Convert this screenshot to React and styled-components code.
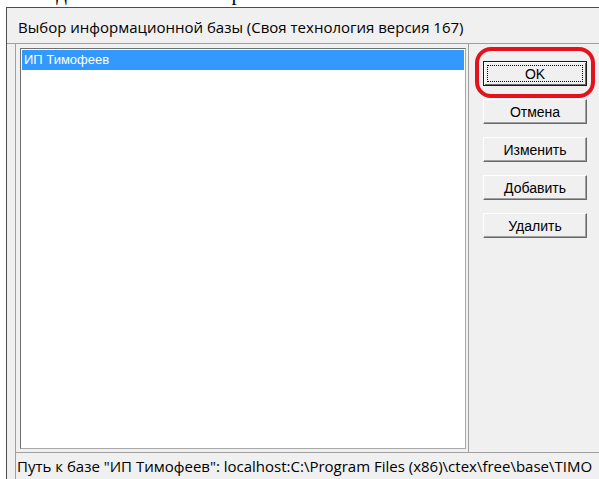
import styled, { createGlobalStyle } from 'styled-components';

const GlobalStyle = createGlobalStyle`
  html, body {
    margin: 0;
    padding: 0;
    background: #ffffff;
  }
  body {
    width: 599px;
    height: 479px;
    overflow: hidden;
  }
`;

const Page = styled.div`
  width: 599px;
  height: 479px;
  display: flex;
  flex-direction: column;
  overflow: hidden;
`;

// tail of the article line above the dialog, only its lower edge shows
const ArticleLine = styled.div`
  flex: none;
  width: 338px;
  height: 7px;
  overflow: hidden;
  display: flex;
  justify-content: flex-end;
  white-space: nowrap;
  font-family: 'Liberation Serif', 'Times New Roman', serif;
  font-size: 21px;
  line-height: 24px;
  color: #000;

  span {
    flex: none;
    margin-top: -19px;
  }
`;

const Window = styled.div`
  flex: 1;
  min-height: 0;
  margin-left: 6px;
  display: flex;
  flex-direction: column;
  background: #f0f0f0;
  border-left: 1px solid #4d4d4d;
  border-top: 1px solid #4d4d4d;
`;

const TitleBar = styled.div`
  flex: none;
  height: 26px;
  padding: 9px 0 0 11px;
  border-bottom: 1px solid #a0a0a0;
  font-family: 'Open Sans', 'Noto Sans', sans-serif;
  font-size: 15px;
  line-height: 20px;
  color: #000;
  white-space: nowrap;
`;

const Body = styled.div`
  flex: 1;
  min-height: 0;
  padding-left: 8px;
  display: flex;
  flex-direction: column;
`;

const Main = styled.div`
  flex: none;
  height: 408px;
  display: flex;
`;

const ListFrame = styled.div`
  flex: none;
  width: 446px;
  padding: 4px 2px 3px 4px;
  border-left: 1px solid #a0a0a0;
  border-right: 1px solid #a0a0a0;
  display: flex;
`;

const ListBox = styled.div`
  flex: 1;
  background: #ffffff;
  border-top: 1px solid #6f6f6f;
  border-left: 1px solid #6f6f6f;
  border-right: 1px solid #a9a9a9;
  border-bottom: 1px solid #a9a9a9;
  padding: 1px 1px 0 1px;
`;

const ListItem = styled.div`
  height: 20px;
  padding-left: 2px;
  font-family: 'Liberation Sans', Arial, sans-serif;
  font-size: 13px;
  line-height: 20px;
  color: ${({ selected }) => (selected ? '#ffffff' : '#000000')};
  background: ${({ selected }) => (selected ? '#3399ff' : 'transparent')};
`;

const Sidebar = styled.div`
  flex: 1;
  padding: 17px 0 0 14px;
  display: flex;
  flex-direction: column;
  gap: 13px;
`;

const ButtonSlot = styled.div`
  position: relative;
  width: 104px;
  height: 25px;
`;

const Button = styled.button`
  width: 104px;
  height: 25px;
  margin: 0;
  padding: 0;
  display: flex;
  align-items: center;
  justify-content: center;
  background: #f0f0f0;
  border: 1px solid;
  border-color: ${({ primary }) =>
    primary ? '#1a1a1a' : '#ffffff #696969 #696969 #ffffff'};
  box-shadow: ${({ primary }) =>
    primary
      ? 'inset 1px 1px 0 #ffffff, inset -1px -1px 0 #696969'
      : 'inset -1px -1px 0 #a0a0a0'};
  font-family: 'Liberation Sans', Arial, sans-serif;
  font-size: 14px;
  color: #000;
`;

const FocusRing = styled.span`
  flex: 1;
  align-self: stretch;
  margin: 3px;
  border: 1px dotted #000;
  display: flex;
  align-items: center;
  justify-content: center;
`;

// red marker drawn around the default button
const Marker = styled.div`
  position: absolute;
  left: -8px;
  right: -8px;
  top: -14px;
  bottom: -12px;
  border: 4px solid #e5111b;
  border-radius: 16px;
  pointer-events: none;
`;

const StatusBar = styled.div`
  flex: 1;
  border-left: 1px solid #a0a0a0;
  border-top: 1px solid #a0a0a0;
  padding: 3px 0 0 1px;
  font-family: 'Open Sans', 'Noto Sans', sans-serif;
  font-size: 15px;
  line-height: 20px;
  color: #000;
  white-space: nowrap;
  overflow: hidden;
`;

const actions = ['Отмена', 'Изменить', 'Добавить', 'Удалить'];

export default function App() {
  return (
    <Page>
      <GlobalStyle />
      <ArticleLine>
        <span>нажимаем кнопку «Изменить» для изменения настройки базы.</span>
      </ArticleLine>
      <Window>
        <TitleBar>Выбор информационной базы (Своя технология версия 167)</TitleBar>
        <Body>
          <Main>
            <ListFrame>
              <ListBox>
                <ListItem selected>ИП Тимофеев</ListItem>
              </ListBox>
            </ListFrame>
            <Sidebar>
              <ButtonSlot>
                <Button primary>
                  <FocusRing>OK</FocusRing>
                </Button>
                <Marker />
              </ButtonSlot>
              {actions.map((label) => (
                <ButtonSlot key={label}>
                  <Button>{label}</Button>
                </ButtonSlot>
              ))}
            </Sidebar>
          </Main>
          <StatusBar>
            Путь к базе "ИП Тимофеев": localhost:C:\Program Files (x86)\ctex\free\base\TIMO
          </StatusBar>
        </Body>
      </Window>
    </Page>
  );
}
